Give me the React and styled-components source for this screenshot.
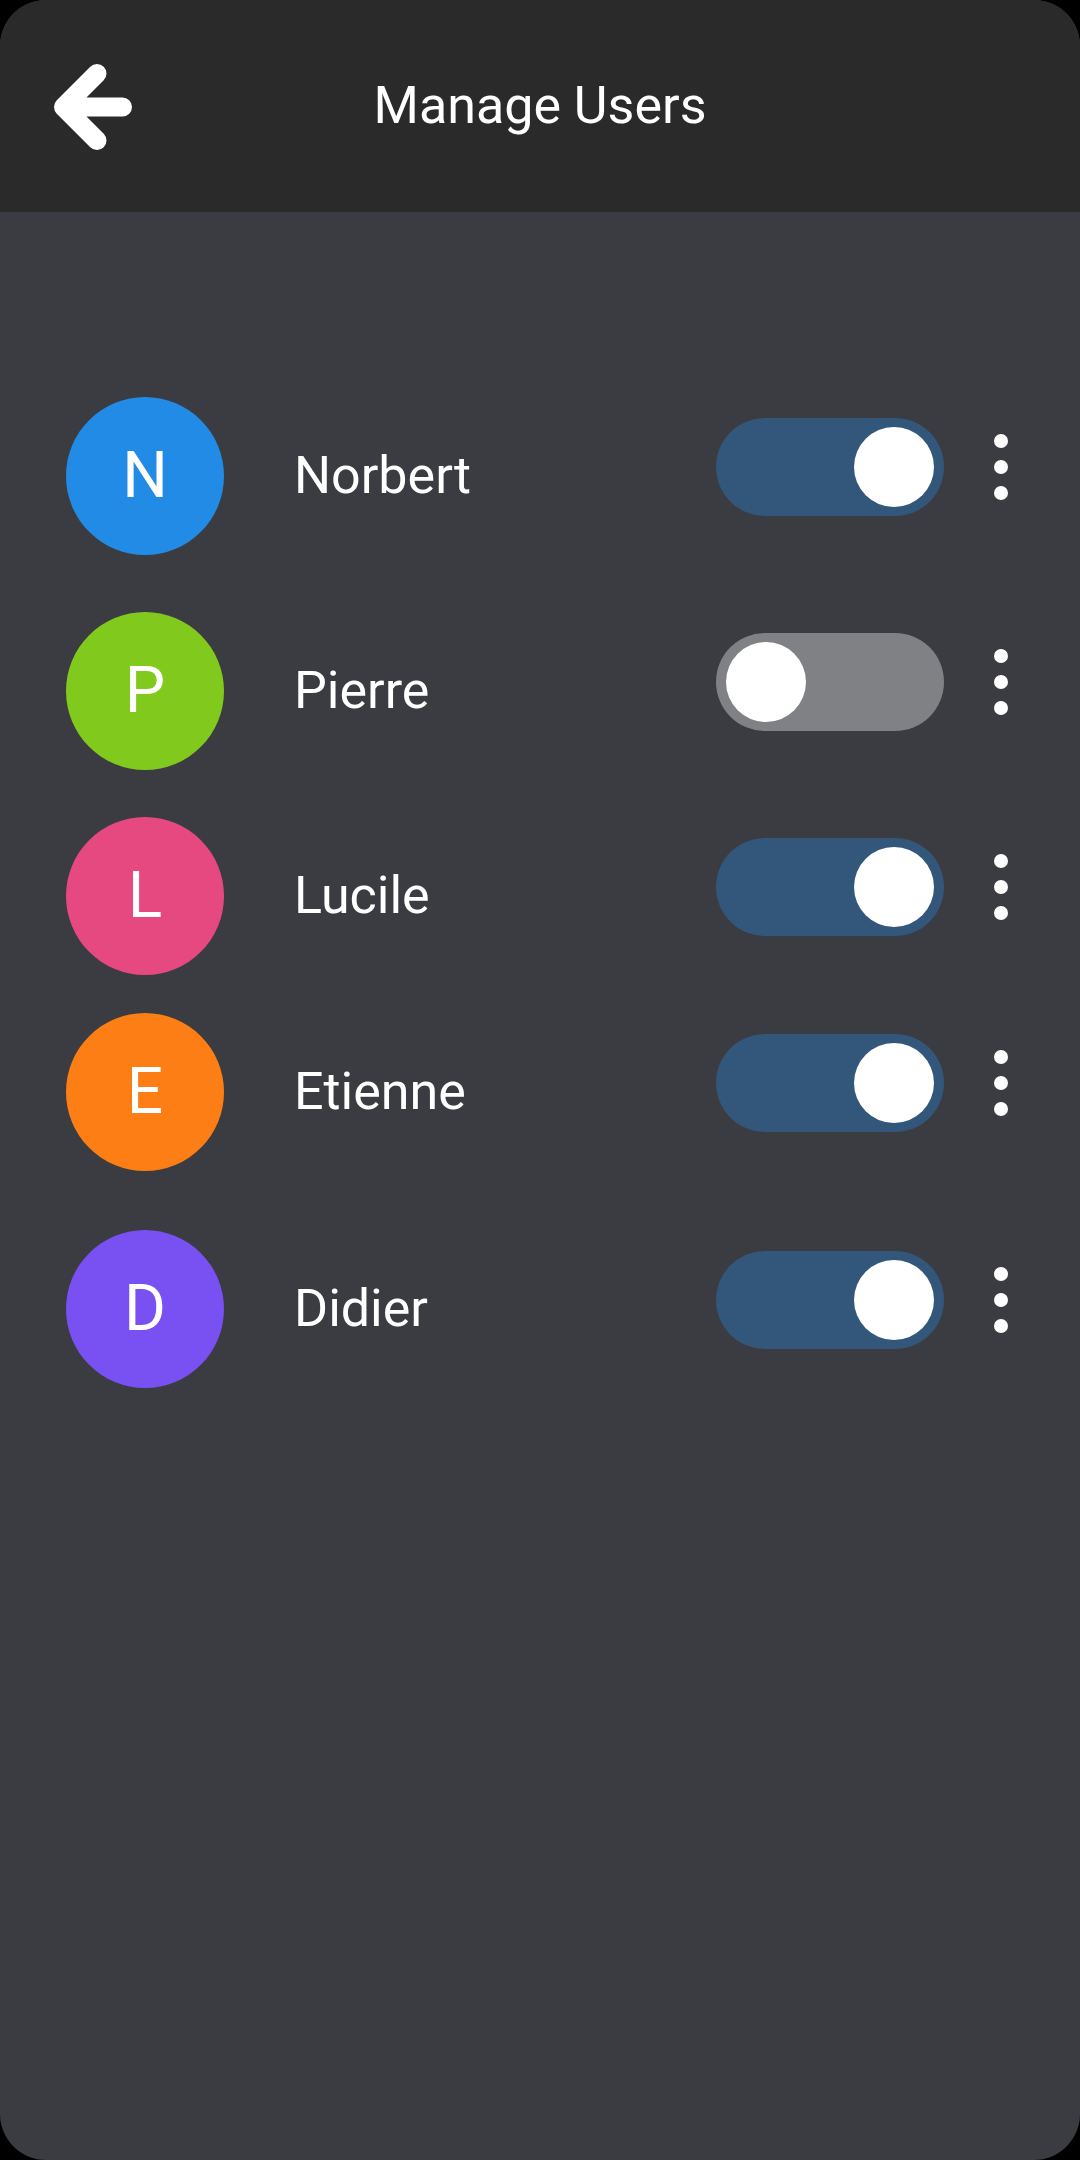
import React from "react";
import styled, { createGlobalStyle } from "styled-components";

const Global = createGlobalStyle`
  html, body {
    margin: 0;
    padding: 0;
    background: #000;
  }
  * { box-sizing: border-box; }
`;

const Screen = styled.div`
  width: 1080px;
  height: 2160px;
  background: #3b3c41;
  border-radius: 46px;
  overflow: hidden;
  font-family: Roboto, "Noto Sans", Arial, sans-serif;
  color: #fff;
  display: flex;
  flex-direction: column;
`;

const TopBar = styled.header`
  height: 212px;
  flex: none;
  background: #2a2a2b;
  display: grid;
  grid-template-columns: 1fr auto 1fr;
  align-items: center;
`;

const BackButton = styled.button`
  justify-self: start;
  margin-left: 50px;
  margin-top: 2px;
  padding: 0;
  border: none;
  background: none;
  width: 90px;
  height: 94px;
  display: flex;
  cursor: pointer;
`;

const Title = styled.h1`
  margin: 0;
  font-size: 52px;
  font-weight: 400;
  line-height: 1;
  letter-spacing: 0;
`;

const List = styled.main`
  display: flex;
  flex-direction: column;
  padding: 185px 59px 0 66px;
`;

const Row = styled.div`
  display: flex;
  align-items: center;
  height: 158px;
  margin-top: ${(p) => p.$gap}px;
`;

const Avatar = styled.div`
  width: 158px;
  height: 158px;
  flex: none;
  border-radius: 50%;
  background: ${(p) => p.$color};
  display: flex;
  align-items: center;
  justify-content: center;
  font-size: 64px;
  line-height: 1;
  color: #fff;
`;

const Name = styled.span`
  margin-left: 70px;
  flex: 1;
  font-size: 52px;
  line-height: 1;
`;

const Controls = styled.div`
  display: flex;
  align-items: center;
  gap: 37px;
  margin-bottom: 19px;
`;

const Track = styled.div`
  width: 228px;
  height: 98px;
  border-radius: 49px;
  padding: 9px 10px;
  display: flex;
  justify-content: ${(p) => (p.$on ? "flex-end" : "flex-start")};
  background: ${(p) => (p.$on ? "#33577a" : "#808185")};
`;

const Knob = styled.div`
  width: 80px;
  height: 80px;
  border-radius: 50%;
  background: #fff;
`;

const MoreButton = styled.div`
  width: 40px;
  display: flex;
  flex-direction: column;
  align-items: center;
  gap: 12px;
`;

const Dot = styled.span`
  width: 14px;
  height: 14px;
  border-radius: 50%;
  background: #fff;
`;

const users = [
  { name: "Norbert", color: "#228be6", on: true, gap: 0 },
  { name: "Pierre", color: "#82c91e", on: false, gap: 57 },
  { name: "Lucile", color: "#e64980", on: true, gap: 47 },
  { name: "Etienne", color: "#fd7e14", on: true, gap: 38 },
  { name: "Didier", color: "#7950f2", on: true, gap: 59 },
];

function BackArrow() {
  return (
    <svg width="90" height="94" viewBox="0 0 90 94" fill="none">
      <path
        d="M47 13.5 L13.5 47 L47 80.5 M13.5 47 L72.5 47"
        stroke="#fff"
        strokeWidth="19"
        strokeLinecap="round"
        strokeLinejoin="round"
      />
    </svg>
  );
}

export default function App() {
  return (
    <>
      <Global />
      <Screen>
        <TopBar>
          <BackButton aria-label="Back">
            <BackArrow />
          </BackButton>
          <Title>Manage Users</Title>
          <span />
        </TopBar>
        <List>
          {users.map((u) => (
            <Row key={u.name} $gap={u.gap}>
              <Avatar $color={u.color}>{u.name[0]}</Avatar>
              <Name>{u.name}</Name>
              <Controls>
                <Track $on={u.on}>
                  <Knob />
                </Track>
                <MoreButton>
                  <Dot />
                  <Dot />
                  <Dot />
                </MoreButton>
              </Controls>
            </Row>
          ))}
        </List>
      </Screen>
    </>
  );
}
